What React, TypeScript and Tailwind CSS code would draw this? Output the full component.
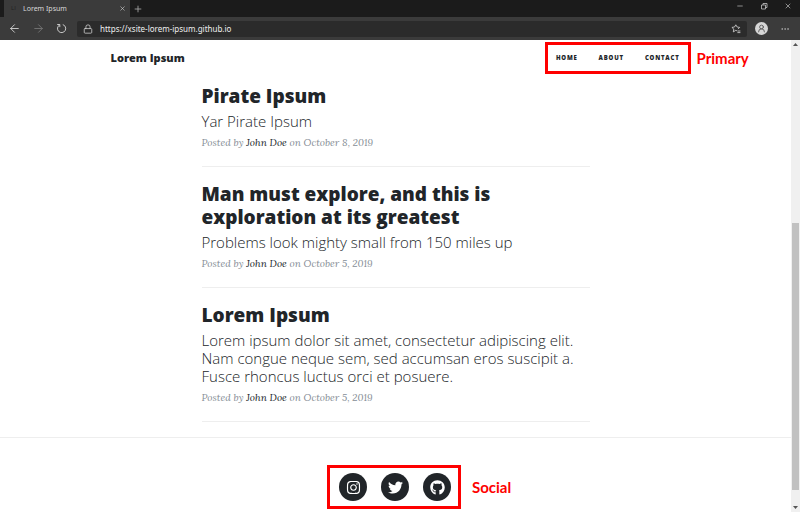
import React from "react";
import { FaInstagram, FaTwitter, FaGithub } from "react-icons/fa";
import {
  ArrowLeft,
  ArrowRight,
  Lock,
  Minus,
  MoreHorizontal,
  Plus,
  UserRound,
  X,
} from "lucide-react";

type Post = { title: string; subtitle: string; date: string };

const posts: Post[] = [
  { title: "Pirate Ipsum", subtitle: "Yar Pirate Ipsum", date: "October 8, 2019" },
  {
    title: "Man must explore, and this is exploration at its greatest",
    subtitle: "Problems look mighty small from 150 miles up",
    date: "October 5, 2019",
  },
  {
    title: "Lorem Ipsum",
    subtitle:
      "Lorem ipsum dolor sit amet, consectetur adipiscing elit. Nam congue neque sem, sed accumsan eros suscipit a. Fusce rhoncus luctus orci et posuere.",
    date: "October 5, 2019",
  },
];

const social = [
  { name: "Instagram", Icon: FaInstagram },
  { name: "Twitter", Icon: FaTwitter },
  { name: "GitHub", Icon: FaGithub },
];

function TabStrip() {
  return (
    <div className="flex h-[17px] items-stretch bg-[#1b1b1b] pl-1 text-[#d8d8d8]">
      <div className="flex w-[126px] items-center bg-[#3b3b3b] pr-1 pl-[7px]">
        <span className="w-3 text-[6px] text-[#222]">LI</span>
        <span className="flex-1 font-['Noto_Sans',sans-serif] text-[7px] leading-none">Lorem Ipsum</span>
        <button type="button" aria-label="Close tab">
          <X size={7} strokeWidth={2} />
        </button>
      </div>
      <button type="button" aria-label="New tab" className="ml-[3px] flex items-center text-[#aaa]">
        <Plus size={10} strokeWidth={2} />
      </button>
      <div className="ml-auto flex items-start gap-4 pt-[2px] pr-2 text-[#c4c4c4]">
        <button type="button" aria-label="Minimize">
          <Minus size={8} strokeWidth={2} />
        </button>
        <button type="button" aria-label="Restore">
          <svg width="8" height="8" viewBox="0 0 8 8" fill="none" stroke="currentColor" strokeWidth="0.8">
            <path d="M1.5 3h4v4h-4z M3 3V1.5h4v4H5.5" />
          </svg>
        </button>
        <button type="button" aria-label="Close window">
          <X size={8} strokeWidth={2} />
        </button>
      </div>
    </div>
  );
}

function Toolbar() {
  return (
    <div className="flex h-[23px] items-center bg-[#3b3b3b] pl-2 text-[#d8d8d8]">
      <button type="button" aria-label="Back" className="w-6">
        <ArrowLeft size={13} strokeWidth={1.6} />
      </button>
      <button type="button" aria-label="Forward" className="w-6 text-[#777]">
        <ArrowRight size={13} strokeWidth={1.6} />
      </button>
      <button type="button" aria-label="Reload" className="w-[21px]">
        <svg width="11" height="11" viewBox="0 0 11 11" fill="none" stroke="currentColor" strokeWidth="0.9">
          <path d="M6.8 1.6a4.1 4.1 0 1 1-3.3.4M1.2 1.5h2.6v2.6" />
        </svg>
      </button>
      <div className="flex h-4 flex-1 items-center rounded-xs bg-[#2b2b2b] px-1.5">
        <Lock size={10} strokeWidth={1.8} />
        <input
          aria-label="Address"
          defaultValue="https://xsite-lorem-ipsum.github.io"
          className="ml-[7px] min-w-0 flex-1 bg-transparent font-['Noto_Sans',sans-serif] text-[8px] text-[#eee] outline-none"
        />
        <button type="button" aria-label="Add to favorites">
          <svg width="10" height="10" viewBox="0 0 10 10" fill="none" stroke="currentColor" strokeWidth="0.8">
            <path d="M6 6.9 4.8 6.3 2.3 7.9l.5-2.8L.9 3.4l2.6-.4L4.8.8 6.1 3l2.6.4-1.7 1.7M6.4 7h3M6.4 8.6h3" />
          </svg>
        </button>
      </div>
      <button
        type="button"
        aria-label="Profile"
        className="ml-2 flex size-[13px] items-center justify-center rounded-full bg-[#d6d6d6] text-[#444]"
      >
        <UserRound size={9} strokeWidth={2} />
      </button>
      <button type="button" aria-label="More" className="mr-2.5 ml-3 text-[#aaa]">
        <MoreHorizontal size={10} strokeWidth={2} />
      </button>
    </div>
  );
}

function ScrollBar() {
  return (
    <div className="flex w-[9px] flex-col items-center bg-[#f0f0f0] py-[3px]">
      <svg width="5" height="3" viewBox="0 0 5 3" fill="#555">
        <path d="M0 3 2.5 0 5 3z" />
      </svg>
      <div className="flex-[177]" />
      <div className="w-[7px] flex-[267] bg-[#c1c1c1]" />
      <div className="flex-[16]" />
      <svg width="5" height="3" viewBox="0 0 5 3" fill="#555">
        <path d="M0 0h5L2.5 3z" />
      </svg>
    </div>
  );
}

function PostPreview({ title, subtitle, date }: Post) {
  return (
    <article className="border-b border-[#eeeeee] pt-4 pb-[15px]">
      <a href="#post">
        <h2 className="text-[19px] leading-[23px] font-extrabold">{title}</h2>
        <h3 className="mt-1 text-[15px] leading-[18px] font-light">{subtitle}</h3>
      </a>
      <p className="mt-[5px] font-['Lora','Liberation_Serif',serif] text-[10px] leading-4 text-[#868e96] italic">
        Posted by{" "}
        <a href="#author" className="text-[#212529]">
          John Doe
        </a>{" "}
        on {date}
      </p>
    </article>
  );
}

export default function App() {
  return (
    <div className="flex h-screen flex-col overflow-hidden bg-white font-['Open_Sans',sans-serif] text-[#212529]">
      <div className="shrink-0">
        <TabStrip />
        <Toolbar />
      </div>
      <div className="flex min-h-0 flex-1">
        <div className="min-w-0 flex-1 overflow-hidden">
          <header className="mx-auto flex max-w-[590px] items-center justify-between pt-[2px] pl-[10px]">
            <a href="#home" className="text-[11px] font-extrabold">
              Lorem Ipsum
            </a>
            <nav
              aria-label="Primary"
              className="relative flex h-8 items-center gap-[21px] border-[3px] border-[#fe0000] px-2 text-[6px] font-extrabold tracking-[0.8px]"
            >
              <a href="#home">HOME</a>
              <a href="#about">ABOUT</a>
              <a href="#contact">CONTACT</a>
              <span className="absolute left-full ml-[9px] font-['Lato',sans-serif] text-[15px] font-bold tracking-normal text-[#fe0000]">
                Primary
              </span>
            </nav>
          </header>
          <main className="mx-auto -mt-[5px] max-w-[388px]">
            {posts.map((post) => (
              <PostPreview key={post.title} {...post} />
            ))}
          </main>
          <footer className="mt-[15px] flex justify-center border-t border-[#eeeeee] pt-[27px]">
            <div className="relative mr-[3px] flex h-11 items-center gap-[14px] border-[3px] border-[#fe0000] pr-[7px] pl-[9px]">
              {social.map(({ name, Icon }) => (
                <a
                  key={name}
                  href="#social"
                  aria-label={name}
                  className="flex size-7 items-center justify-center rounded-full bg-[#212529] text-white"
                >
                  <Icon size={15} />
                </a>
              ))}
              <span className="absolute left-full ml-[14px] font-['Lato',sans-serif] text-[15px] font-bold text-[#fe0000]">
                Social
              </span>
            </div>
          </footer>
        </div>
        <ScrollBar />
      </div>
    </div>
  );
}
